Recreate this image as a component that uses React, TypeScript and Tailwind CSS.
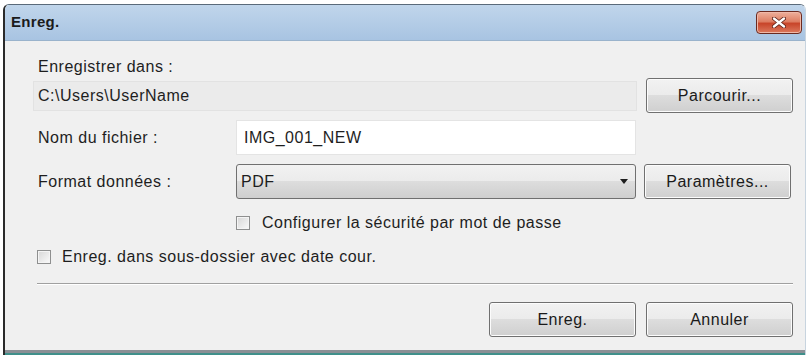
import React from "react";

const btn =
  "h-[35px] w-[147px] rounded-[3px] border border-[#707070] bg-[linear-gradient(#f2f2f2_0%,#ebebeb_49%,#dddddd_50%,#cfcfcf_100%)] shadow-[inset_0_0_0_1px_#fcfcfc] text-[16px] tracking-[0.5px] text-[#1a1a1a] flex items-center justify-center";

function Check() {
  return (
    <span className="w-[14px] h-[14px] border border-[#8e8f8f] bg-[linear-gradient(135deg,#d6d6d6,#fafafa)] shadow-[inset_0_0_0_1px_#f4f4f4] shrink-0" />
  );
}

export default function App() {
  return (
    <div
      className="w-[809px] h-[357px] bg-white relative overflow-hidden"
      style={{ fontFamily: '"Liberation Sans", Arial, sans-serif' }}
    >
      <div className="absolute left-[3px] top-[4px] w-[803px] h-[351px] rounded-t-[6px] border-l-[2px] border-t border-r border-l-[#2a2a2a] border-t-[#5a6a7a] border-r-[#c8d4df] flex flex-col overflow-hidden">
        {/* title bar */}
        <div className="h-[36px] shrink-0 bg-[linear-gradient(#c0d5eb,#a8c4e2)] flex items-center pl-[6px] pr-[3px] border-b border-[#9ab3cc]">
          <span className="text-[15px] font-bold text-[#1b1b1b] tracking-[0.3px]">Enreg.</span>
          <div className="ml-auto w-[46px] h-[23px] rounded-[4px] border border-[#6b2a20] bg-[linear-gradient(#eeb09c_0%,#de7f64_45%,#c8452a_55%,#dc7a5e_100%)] shadow-[inset_0_0_0_1px_#f0b8a8] flex items-center justify-center">
            <svg width="14" height="11" viewBox="0 0 14 11">
              <path d="M2 1.5 L12 9.5 M12 1.5 L2 9.5" stroke="#5a1e14" strokeWidth="4" strokeLinecap="round" />
              <path d="M2 1.5 L12 9.5 M12 1.5 L2 9.5" stroke="#ffffff" strokeWidth="2.4" strokeLinecap="round" />
            </svg>
          </div>
        </div>
        {/* content */}
        <div className="flex-1 bg-[#f0f0f0] flex flex-col pl-[28px] pr-[12px] text-[16px] tracking-[0.5px] text-[#1e1e1e]">
          <div className="mt-[17px] pl-[5px] leading-[18px]">Enregistrer dans :</div>
          <div className="mt-[2px] flex items-center gap-[9px]">
            <div className="flex-1 h-[30px] bg-[#ebebeb] border border-[#e2e2e2] flex items-center pl-[4px] mt-[1px]">
              C:\Users\UserName
            </div>
            <div className={btn}>Parcourir...</div>
          </div>
          <div className="mt-[7px] flex items-center">
            <div className="w-[203px] pl-[5px]">Nom du fichier :</div>
            <div className="w-[400px] h-[35px] bg-white border border-[#e4e4e4] flex items-center pl-[7px]">
              IMG_001_NEW
            </div>
          </div>
          <div className="mt-[9px] flex items-center">
            <div className="w-[203px] pl-[5px]">Format données :</div>
            <div className="w-[400px] h-[35px] rounded-[3px] border border-[#707070] bg-[linear-gradient(#f2f2f2_0%,#ebebeb_49%,#dddddd_50%,#cfcfcf_100%)] flex items-center pl-[4px] pr-[7px]">
              <span>PDF</span>
              <svg className="ml-auto" width="8" height="5" viewBox="0 0 8 5">
                <path d="M0 0 L8 0 L4 5 Z" fill="#1e1e1e" />
              </svg>
            </div>
            <div className={btn + " ml-[8px]"}>Paramètres...</div>
          </div>
          <div className="mt-[16px] flex items-center pl-[203px] gap-[12px] h-[16px]">
            <Check />
            <span>Configurer la sécurité par mot de passe</span>
          </div>
          <div className="mt-[18px] flex items-center pl-[4px] gap-[11px] h-[16px]">
            <Check />
            <span>Enreg. dans sous-dossier avec date cour.</span>
          </div>
          <div className="mt-[18px] ml-[4px] h-[2px] border-t border-[#a0a0a0] border-b border-b-white" />
          <div className="mt-[17px] flex justify-end gap-[10px]">
            <div className={btn}>Enreg.</div>
            <div className={btn}>Annuler</div>
          </div>
          <div className="flex-1" />
        </div>
        <div className="h-[3px] bg-[#8a8f95] shrink-0" />
        <div className="h-[2px] bg-[#3f8f8a] shrink-0" />
      </div>
    </div>
  );
}
